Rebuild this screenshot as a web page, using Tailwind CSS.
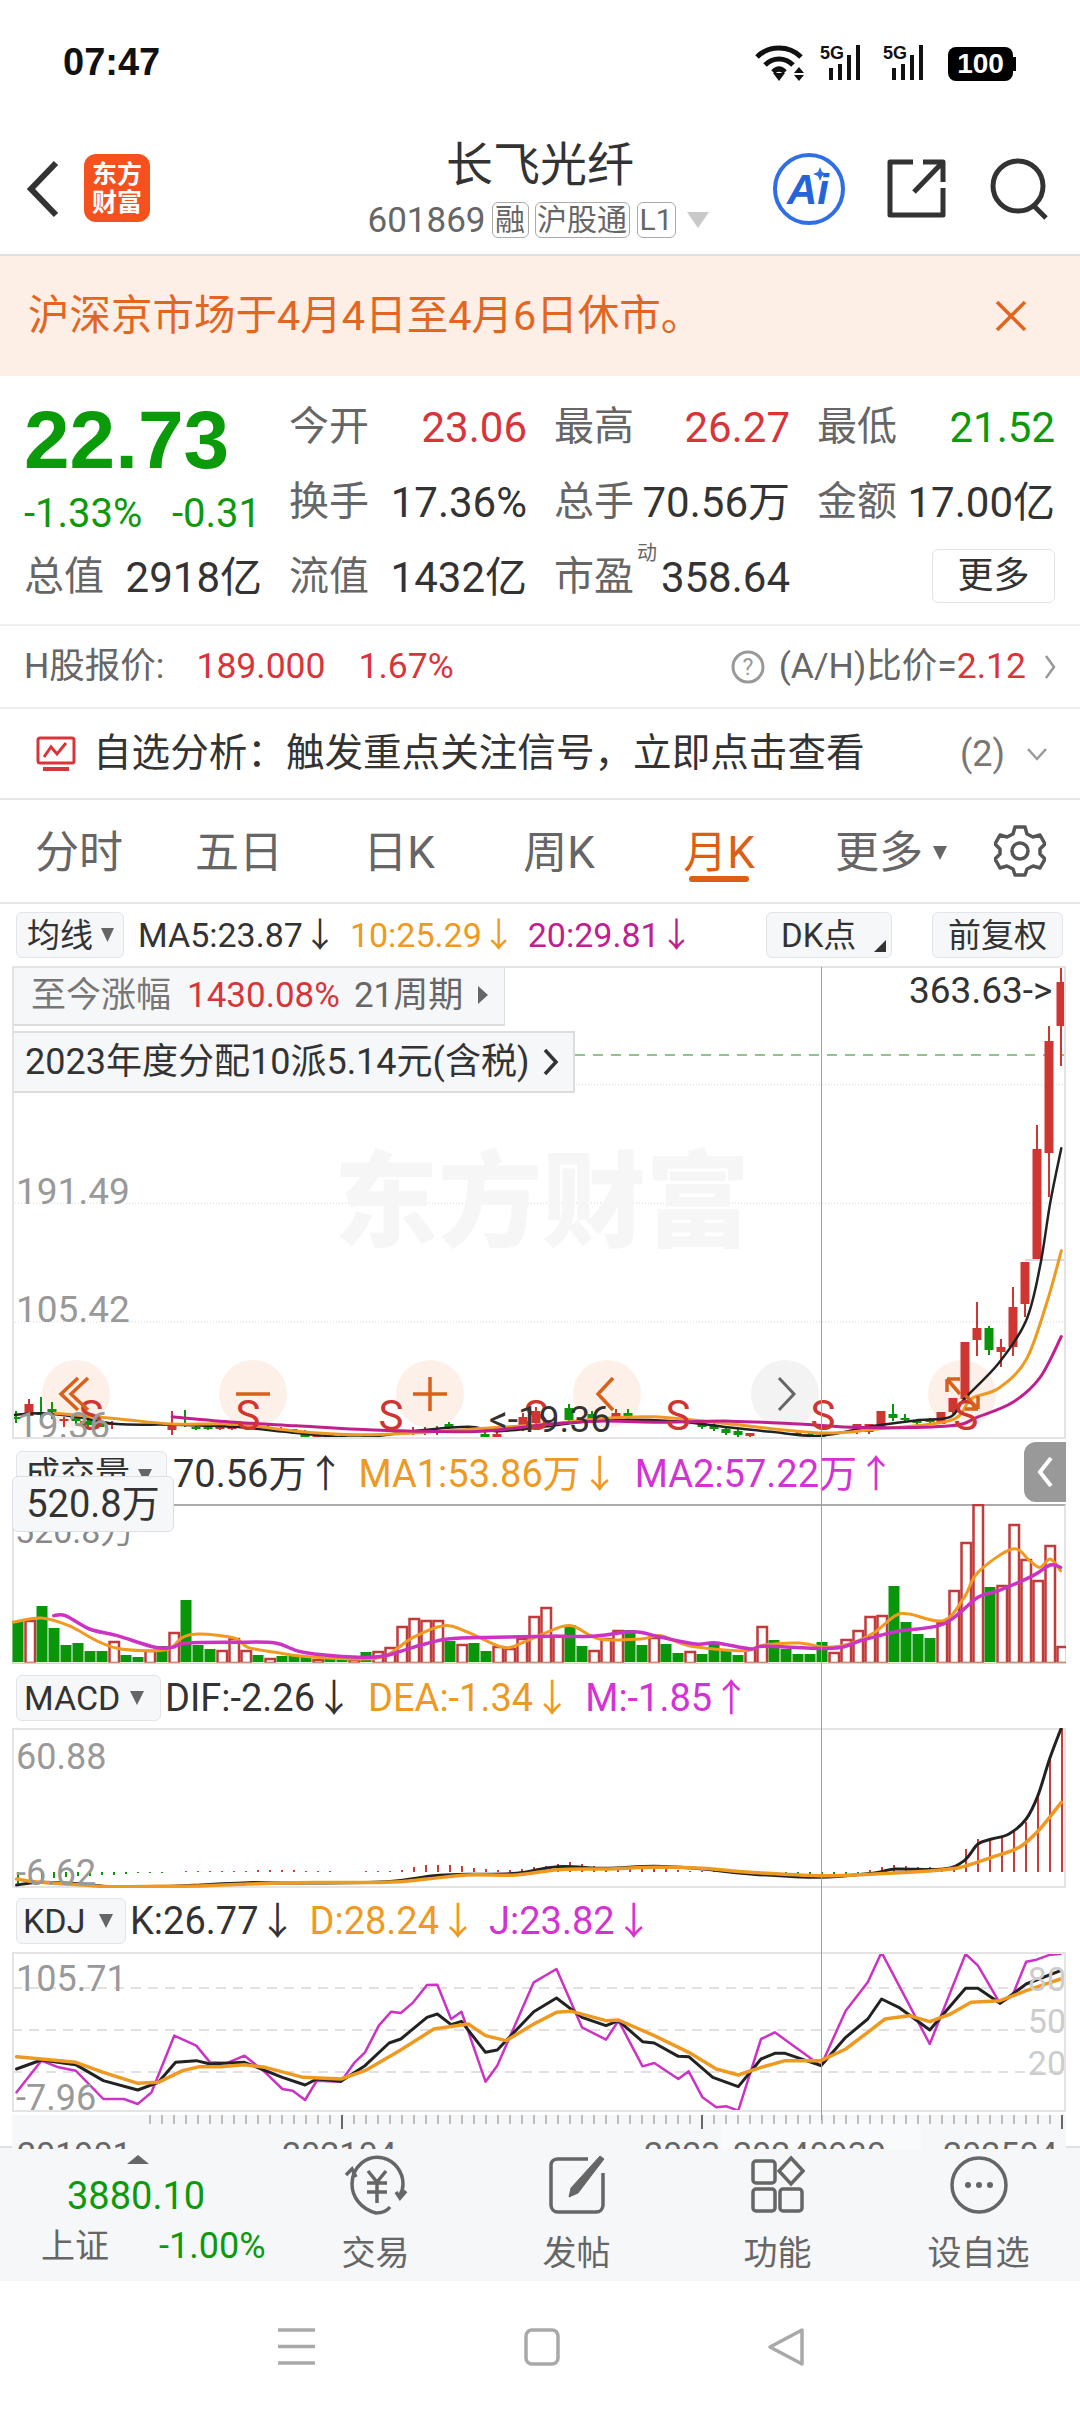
<!DOCTYPE html>
<html lang="zh-CN">
<head>
<meta charset="UTF-8">
<meta name="viewport" content="width=device-width, initial-scale=1.0">
<title>长飞光纤</title>
<script src="https://cdn.jsdelivr.net/npm/@tailwindcss/browser@4"></script>
</head>
<body class="bg-white">
<div class="relative w-[1080px] h-[2414px] overflow-hidden bg-white text-[#333] leading-none [font-family:Roboto,'Noto_Sans_CJK_SC',sans-serif]">

  <!-- status bar -->
  <div class="h-[122px] flex pl-[63px] pr-[64px] pt-[44px] justify-between items-start">
    <span class="text-[38px] font-bold text-[#111] [font-family:'Liberation_Sans',sans-serif] mt-[-1px]">07:47</span>
    <div class="flex items-start">
      <svg width="52" height="36" viewBox="0 0 52 36" class="mt-[1px]" fill="none" stroke="#111" stroke-width="5">
        <path d="M2 12 C14 0 34 0 46 12"/><path d="M10 20 C18 12 30 12 38 20"/><path d="M18 27 C22 23 26 23 30 27"/>
        <path d="M18 28 L24 36 L30 28 Z" fill="#111" stroke="none"/>
        <path d="M44 22 l5 6 h-10 Z M44 36 l5 -6 h-10 Z" fill="#111" stroke="none"/>
      </svg>
      <div class="relative w-[48px] h-[36px] ml-[13px]">
        <span class="absolute left-0 top-0 text-[18px] font-bold text-[#111] [font-family:'Liberation_Sans',sans-serif]">5G</span>
        <svg class="absolute left-0 top-0" width="48" height="36"><path d="M11 36V24M20 36V20M29 36V11M38 36V1" stroke="#111" stroke-width="4"/></svg>
      </div>
      <div class="relative w-[48px] h-[36px] ml-[15px]">
        <span class="absolute left-0 top-0 text-[18px] font-bold text-[#111] [font-family:'Liberation_Sans',sans-serif]">5G</span>
        <svg class="absolute left-0 top-0" width="48" height="36"><path d="M11 36V24M20 36V20M29 36V11M38 36V1" stroke="#111" stroke-width="4"/></svg>
      </div>
      <div class="ml-[17px] mt-[3px] w-[65px] h-[34px] rounded-[8px] bg-black text-white flex items-center justify-center text-[28px] font-bold [font-family:'Liberation_Sans',sans-serif]">100</div>
      <div class="w-[3px] h-[14px] bg-black mt-[13px]"></div>
    </div>
  </div>

  <!-- header -->
  <div class="relative h-[134px] border-b-2 border-[#dfdfdf]">
    <svg class="absolute left-[25px] top-[38px]" width="36" height="58" fill="none" stroke="#333" stroke-width="6"><path d="M31 3 L6 29 L31 55"/></svg>
    <div class="absolute left-[84px] top-[32px] w-[66px] h-[68px] rounded-[12px] bg-[#f4511e] text-white text-[25px] font-bold flex flex-col items-center justify-center gap-[3px]">
      <span>东方</span><span>财富</span>
    </div>
    <div class="flex flex-col items-center pt-[19px]">
      <div class="text-[47px] text-[#333] h-[46px] flex items-center">长飞光纤</div>
      <div class="flex items-center mt-[15px] h-[36px] ml-[-4px] text-[#666]">
        <span class="text-[35px]">601869</span>
        <span class="ml-[6px] w-[37px] h-[36px] border border-[#aaa] rounded-[6px] text-[30px] flex items-center justify-center">融</span>
        <span class="ml-[6px] w-[95px] h-[36px] border border-[#aaa] rounded-[6px] text-[30px] flex items-center justify-center">沪股通</span>
        <span class="ml-[7px] w-[39px] h-[36px] border border-[#aaa] rounded-[6px] text-[30px] flex items-center justify-center">L1</span>
        <svg class="ml-[11px]" width="22" height="16"><path d="M0 0H22L11 16Z" fill="#c9c9c9"/></svg>
      </div>
    </div>
    <svg class="absolute left-[772px] top-[30px]" width="74" height="74" fill="none">
      <circle cx="37" cy="37" r="34" stroke="#2f6ee5" stroke-width="4"/>
      <path d="M48 15L50 20L55 22L50 24L48 29L46 24L41 22L46 20Z" fill="#2f6ee5"/>
    </svg>
    <span class="absolute left-[787px] top-[47px] text-[#2563d8] text-[42px] font-bold italic [font-family:'Liberation_Sans',sans-serif]">Ai</span>
    <svg class="absolute left-[886px] top-[36px]" width="62" height="62" fill="none" stroke="#333" stroke-width="5"><path d="M27 4H4V57H57V30M28 34L56 5M37 4H57V24" stroke-linejoin="round"/></svg>
    <svg class="absolute left-[990px] top-[36px]" width="64" height="62" fill="none" stroke="#333" stroke-width="5"><circle cx="28" cy="28" r="25"/><path d="M44 48L56 60"/></svg>
  </div>

  <!-- notice -->
  <div class="h-[120px] bg-[#fdeee6] flex items-center justify-between pl-[28px] pr-[52px] text-[#e2661f]">
    <span class="text-[41.5px]">沪深京市场于4月4日至4月6日休市。</span>
    <svg width="34" height="34" fill="none" stroke="#e2661f" stroke-width="3.5"><path d="M3 3L31 31M31 3L3 31"/></svg>
  </div>

  <!-- quote -->
  <div class="h-[250px] border-b-2 border-[#eee] pt-[14px] pl-[24px]">
    <div class="grid grid-cols-[238px_238px_236px_238px] grid-rows-[75px_75px_75px] gap-x-[27px] text-[42px] text-[#333] items-center">
      <div class="row-span-2 self-start pt-[10px] text-[#0a9a0a]">
        <div class="h-[80px] flex items-center text-[82px] font-bold [font-family:'Liberation_Sans',sans-serif]">22.73</div>
        <div class="flex justify-between mt-[10px] h-[48px] items-center text-[40px] pr-[1px]"><span>-1.33%</span><span>-0.31</span></div>
      </div>
      <div class="flex justify-between"><span class="text-[40px] text-[#666]">今开</span><span class="text-[#d8353a]">23.06</span></div>
      <div class="flex justify-between"><span class="text-[40px] text-[#666]">最高</span><span class="text-[#d8353a]">26.27</span></div>
      <div class="flex justify-between"><span class="text-[40px] text-[#666]">最低</span><span class="text-[#0a9a0a]">21.52</span></div>
      <div class="flex justify-between"><span class="text-[40px] text-[#666]">换手</span><span>17.36%</span></div>
      <div class="flex justify-between"><span class="text-[40px] text-[#666]">总手</span><span>70.56万</span></div>
      <div class="flex justify-between"><span class="text-[40px] text-[#666]">金额</span><span>17.00亿</span></div>
      <div class="flex justify-between"><span class="text-[40px] text-[#666]">总值</span><span>2918亿</span></div>
      <div class="flex justify-between"><span class="text-[40px] text-[#666]">流值</span><span>1432亿</span></div>
      <div class="relative flex justify-between"><span class="text-[40px] text-[#666]">市盈</span><span class="absolute left-[83px] top-[-14px] text-[20px] text-[#666]">动</span><span>358.64</span></div>
      <div class="flex justify-end"><span class="w-[123px] h-[54px] mt-[-4px] border border-[#e3e3e3] rounded-[6px] text-[36px] flex items-center justify-center">更多</span></div>
    </div>
  </div>

  <!-- H share row -->
  <div class="h-[83px] border-b-2 border-[#eee] flex items-center pl-[24px] pr-[24px] text-[35.5px]">
    <span class="text-[#666]">H股报价:</span>
    <span class="ml-[32px] text-[#d8353a]">189.000</span>
    <span class="ml-[33px] text-[#d8353a]">1.67%</span>
    <svg class="ml-auto" width="34" height="34" fill="none" stroke="#999" stroke-width="3"><circle cx="17" cy="17" r="15"/><text x="17" y="25" text-anchor="middle" font-size="23" fill="#999" stroke="none">?</text></svg>
    <span class="ml-[14px] text-[#666]">(A/H)比价=</span><span class="text-[#d8353a]">2.12</span>
    <svg class="ml-[18px]" width="12" height="26" fill="none" stroke="#999" stroke-width="2.5"><path d="M2 2L10 13L2 24"/></svg>
  </div>

  <!-- watch list hint -->
  <div class="h-[91px] border-b-2 border-[#e6e6e6] flex items-center pl-[36px] pr-[32px]">
    <svg width="40" height="36" fill="none" stroke="#d8353a" stroke-width="3"><rect x="2" y="2" width="36" height="25" rx="2"/><path d="M8 21L15 11L21 18L30 7"/><path d="M7 33H33" stroke-width="4"/></svg>
    <span class="ml-[17px] text-[38.6px]">自选分析&#xFF1A;触发重点关注信号&#xFF0C;立即点击查看</span>
    <span class="ml-auto text-[36px] text-[#777]">(2)</span>
    <svg class="ml-[21px]" width="22" height="14" fill="none" stroke="#999" stroke-width="2.5"><path d="M2 2L11 12L20 2"/></svg>
  </div>

  <!-- period tabs -->
  <div class="h-[104px] border-b-2 border-[#e6e6e6] flex items-center ml-[-1px] pt-[4px] text-[44px] text-[#666]">
    <span class="w-[160px] text-center">分时</span>
    <span class="w-[160px] text-center">五日</span>
    <span class="w-[160px] text-center">日K</span>
    <span class="w-[160px] text-center">周K</span>
    <span class="relative w-[160px] text-center text-[#dd5f15]">月K<i class="absolute left-[0px] right-0 mx-auto top-[45px] w-[60px] h-[6px] rounded-full bg-[#dd5f15]"></i></span>
    <span class="w-[160px] pl-[36px] flex items-center">更多<svg class="ml-[10px]" width="14" height="14"><path d="M0 0H14L7 14Z" fill="#666"/></svg></span>
    <svg class="ml-[35px] mt-[-4px]" width="52" height="52" viewBox="0 0 52 52" fill="none" stroke="#555" stroke-width="3.5" stroke-linejoin="round"><path d="M21 2H31L33 9L39 12L46 10L51 19L46 24V29L51 34L46 43L39 41L33 44L31 50H21L19 44L13 41L6 43L1 34L6 29V24L1 19L6 10L13 12L19 9Z"/><circle cx="26" cy="26" r="8"/></svg>
  </div>

  <!-- MA row -->
  <div class="h-[62px] flex items-center pl-[16px] text-[34px]">
    <span class="w-[108px] h-[46px] bg-[#f6f7f9] border border-[#e2e4e8] rounded-[6px] flex items-center pl-[10px] text-[33px]">均线<svg class="ml-[8px]" width="13" height="14"><path d="M0 0H13L6.5 14Z" fill="#666"/></svg></span>
    <span class="ml-[14px]">MA5:23.87↓</span>
    <span class="ml-[13px] text-[#ee9a22]">10:25.29↓</span>
    <span class="ml-[12px] text-[#c0208f]">20:29.81↓</span>
    <span class="relative ml-auto w-[126px] h-[46px] bg-[#f6f7f9] border border-[#e2e4e8] rounded-[6px] flex items-center pl-[14px] text-[33px]">DK点<svg class="absolute right-[5px] bottom-[5px]" width="12" height="12"><path d="M12 0V12H0Z" fill="#333"/></svg></span>
    <span class="ml-[40px] mr-[17px] w-[131px] h-[46px] bg-[#f6f7f9] border border-[#e2e4e8] rounded-[6px] flex items-center justify-center text-[33px]">前复权</span>
  </div>

  <!-- price panel -->
  <div class="relative ml-[12px] w-[1054px] h-[473px] border-2 border-[#e4e4e4] overflow-hidden">
    <svg id="price-svg" class="absolute left-[-2px] top-[-2px]" width="1054" height="473" viewBox="12 967 1054 473"></svg>
    <div class="absolute left-[-2px] top-[-2px] w-[493px] h-[60px] bg-[#f6f7f9] border-b-2 border-r border-[#ddd] flex items-center pl-[19px] text-[35px]">
      <span class="text-[#777]">至今涨幅</span><span class="ml-[16px] text-[#d8353a]">1430.08%</span><span class="ml-[14px] text-[#666]">21周期</span>
      <svg class="ml-[15px]" width="10" height="18"><path d="M0 0L10 9L0 18Z" fill="#666"/></svg>
    </div>
    <div class="absolute left-[-2px] top-[63px] w-[563px] h-[62px] bg-[#f6f7f9] border-2 border-[#ddd] flex items-center pl-[11px] text-[36px]">
      <span>2023年度分配10派5.14元(含税)</span>
      <svg class="ml-[14px]" width="16" height="28" fill="none" stroke="#333" stroke-width="3.5"><path d="M2 2L13 14L2 26"/></svg>
    </div>
    <span class="absolute left-[320px] top-[184px] text-[104px] font-black text-[#f6f6f6]">东方财富</span>
    <span class="absolute left-[2px] top-[205px] text-[37px] text-[#999]">191.49</span>
    <span class="absolute left-[2px] top-[323px] text-[37px] text-[#999]">105.42</span>
    <span class="absolute left-[3px] top-[439px] text-[37px] text-[#999]">19.36</span>
    <span class="absolute left-[895px] top-[4px] text-[37px] text-[#333]">363.63-&gt;</span>
  </div>

  <!-- volume row -->
  <div class="relative h-[65px] flex items-center pl-[16px] pt-[4px] text-[38px]">
    <span class="w-[151px] h-[50px] bg-[#f6f7f9] border border-[#e2e4e8] rounded-[6px] flex items-center pl-[8px] text-[35px] mt-[4px]">成交量<svg class="ml-[8px]" width="14" height="14"><path d="M0 0H14L7 14Z" fill="#666"/></svg></span>
    <span class="ml-[6px]">70.56万↑</span>
    <span class="ml-[14px] text-[#ee9a22]">MA1:53.86万↓</span>
    <span class="ml-[16px] text-[#d433d4]">MA2:57.22万↑</span>
    <div class="absolute left-[1024px] top-[3px] w-[42px] h-[60px] rounded-l-[12px] bg-[#999] flex items-center justify-center">
      <svg width="18" height="32" fill="none" stroke="#fff" stroke-width="4"><path d="M15 2L4 16L15 30"/></svg>
    </div>
    <div class="absolute left-[12px] top-[37px] w-[162px] h-[56px] z-10 bg-[#f6f7f9] border border-[#dcdfe3] rounded-[6px] flex items-center justify-center text-[38px]">520.8万</div>
  </div>

  <!-- volume panel -->
  <div class="relative ml-[12px] w-[1054px] h-[160px] border-t-2 border-[#aaa] border-x-2 border-x-[#e4e4e4]">
    <svg id="vol-svg" class="absolute left-[-2px] top-[-2px]" width="1054" height="160" viewBox="12 1505 1054 160"></svg>
    <span class="absolute left-[1px] top-[8px] text-[34px] text-[#888]">520.8万</span>
  </div>

  <!-- MACD row -->
  <div class="h-[64px] flex items-center pl-[16px] pt-[4px] text-[38px]">
    <span class="w-[145px] h-[46px] bg-[#f6f7f9] border border-[#e2e4e8] rounded-[6px] flex items-center pl-[7px] text-[34px]">MACD<svg class="ml-[10px]" width="14" height="14"><path d="M0 0H14L7 14Z" fill="#666"/></svg></span>
    <span class="ml-[4px]">DIF:-2.26↓</span>
    <span class="ml-[15px] text-[#ee9a22]">DEA:-1.34↓</span>
    <span class="ml-[14px] text-[#d433d4]">M:-1.85↑</span>
  </div>

  <!-- MACD panel -->
  <div class="relative ml-[12px] w-[1054px] h-[160px] border-2 border-[#e4e4e4]">
    <svg id="macd-svg" class="absolute left-[-2px] top-[-2px]" width="1054" height="160" viewBox="12 1729 1054 160"></svg>
    <span class="absolute left-[2px] top-[9px] text-[36px] text-[#999]">60.88</span>
    <span class="absolute left-[2px] top-[125px] text-[36px] text-[#999]">-6.62</span>
  </div>

  <!-- KDJ row -->
  <div class="h-[64px] flex items-center pl-[16px] pt-[2px] text-[38px]">
    <span class="w-[110px] h-[46px] bg-[#f6f7f9] border border-[#e2e4e8] rounded-[6px] flex items-center pl-[6px] text-[34px]">KDJ<svg class="ml-[14px]" width="14" height="14"><path d="M0 0H14L7 14Z" fill="#666"/></svg></span>
    <span class="ml-[4px]">K:26.77↓</span>
    <span class="ml-[13px] text-[#ee9a22]">D:28.24↓</span>
    <span class="ml-[12px] text-[#d433d4]">J:23.82↓</span>
  </div>

  <!-- KDJ panel -->
  <div class="relative ml-[12px] w-[1054px] h-[160px] border-2 border-[#e4e4e4] overflow-hidden">
    <svg id="kdj-svg" class="absolute left-[-2px] top-[-2px]" width="1054" height="160" viewBox="12 1953 1054 160"></svg>
    <span class="absolute left-[2px] top-[7px] text-[36px] text-[#999]">105.71</span>
    <span class="absolute left-[2px] top-[126px] text-[36px] text-[#999]">-7.96</span>
    <span class="absolute right-[-2px] top-[8px] text-[34px] text-[#ccc]">80</span>
    <span class="absolute right-[-2px] top-[50px] text-[34px] text-[#ccc]">50</span>
    <span class="absolute right-[-2px] top-[92px] text-[34px] text-[#ccc]">20</span>
  </div>

  <!-- time axis -->
  <div class="relative ml-[12px] w-[1054px] h-[34px] mt-[3px] mb-[-3px] bg-[#f6f7f9] overflow-hidden">
    <div class="absolute left-[709px] top-[5px] w-[200px] h-[40px] bg-[#f9fafb] rounded-[6px]"></div>
    <svg id="axis-svg" class="absolute left-0 top-0" width="1054" height="34" viewBox="12 2116 1054 34"></svg>
    <span class="absolute left-[5px] top-[22px] text-[34px] text-[#666]">201901</span>
    <span class="absolute left-[270px] top-[22px] text-[34px] text-[#666]">202104</span>
    <span class="absolute left-[632px] top-[22px] text-[34px] text-[#666]">2023</span>
    <span class="absolute left-[721px] top-[22px] text-[34px] text-[#666]">20240930</span>
    <span class="absolute left-[931px] top-[22px] text-[34px] text-[#666]">202504</span>
  </div>

  <!-- bottom toolbar -->
  <div class="h-[135px] bg-[#f6f7f9] border-t-2 border-[#dfe1e4] flex">
    <div class="w-[275px] pt-[7px] pl-[41px] flex flex-col items-start">
      <svg class="ml-[86px]" width="22" height="9"><path d="M11 0L22 9H0Z" fill="#666"/></svg>
      <span class="h-[46px] ml-[26px] mt-[9px] flex items-center text-[38px] text-[#0a9a0a]">3880.10</span>
      <div class="flex items-center h-[40px] mt-[7px]">
        <span class="text-[34px] text-[#666]">上证</span>
        <span class="ml-[50px] text-[36px] text-[#0a9a0a]">-1.00%</span>
      </div>
    </div>
    <div class="w-[201px] flex flex-col items-center pt-[7px] text-[34px] text-[#666]">
      <svg width="66" height="60" viewBox="0 0 66 60" fill="none" stroke="#666" stroke-width="3.5">
        <path d="M40 3C24 -1 9 12 9 29C9 42 18 54 33 58C38 58 44 56 47 52"/>
        <path d="M40 3C52 6 60 17 60 29C60 33 59 37 57 40"/>
        <path d="M3 20L9 14L13 22M63 36L57 43L53 37"/>
        <path d="M25 16L34 27L43 16M24 28H44M24 37H44M34 27V48"/>
      </svg>
      <span class="h-[36px] mt-[20px] flex items-center">交易</span>
    </div>
    <div class="w-[201px] flex flex-col items-center pt-[7px] text-[34px] text-[#666]">
      <svg width="58" height="60" viewBox="0 0 58 60" fill="none" stroke="#666" stroke-width="3.5">
        <path d="M40 4H10C6 4 3 6 3 10V50C3 54 6 57 10 57H48C52 57 55 54 55 50V18"/>
        <path d="M52 1L56 4L30 38L21 42L23 33Z" fill="#666" stroke-width="1"/>
      </svg>
      <span class="h-[36px] mt-[20px] flex items-center">发帖</span>
    </div>
    <div class="w-[201px] flex flex-col items-center pt-[7px] text-[34px] text-[#666]">
      <svg width="54" height="60" viewBox="0 0 54 60" fill="none" stroke="#666" stroke-width="3.5">
        <rect x="2" y="6" width="22" height="22" rx="3"/>
        <path d="M40 3L52 16L40 29L28 16Z"/>
        <rect x="2" y="34" width="22" height="22" rx="3"/>
        <rect x="29" y="34" width="22" height="22" rx="3"/>
      </svg>
      <span class="h-[36px] mt-[20px] flex items-center">功能</span>
    </div>
    <div class="w-[201px] flex flex-col items-center pt-[7px] text-[34px] text-[#666]">
      <svg width="60" height="60" viewBox="0 0 60 60" fill="none" stroke="#666" stroke-width="3.5">
        <circle cx="30" cy="30" r="27"/>
        <circle cx="19" cy="30" r="3" fill="#666" stroke="none"/><circle cx="30" cy="30" r="3" fill="#666" stroke="none"/><circle cx="41" cy="30" r="3" fill="#666" stroke="none"/>
      </svg>
      <span class="h-[36px] mt-[20px] flex items-center">设自选</span>
    </div>
  </div>

  <!-- system nav -->
  <div class="relative h-[132px] bg-white">
    <svg class="absolute left-0 top-0" width="1080" height="132" fill="none" stroke="#a9a9a9" stroke-width="3.5">
      <path d="M278 49H315M278 65.500H315M278 82H315"/>
      <rect x="526" y="49" width="32" height="34" rx="6"/>
      <path d="M802 49V83L770 66Z" stroke-linejoin="round"/>
    </svg>
  </div>

  <!-- crosshair runs through all panels -->
  <div class="absolute left-[821px] top-[967px] w-[1px] h-[1153px] bg-[#a0a0a0]"></div>
</div>

<script>
const NS = 'http://www.w3.org/2000/svg';
const RED = '#cf3531', GREEN = '#0a960a';

function add(svg, tag, attrs, text) {
  const el = document.createElementNS(NS, tag);
  for (const k in attrs) el.setAttribute(k, attrs[k]);
  if (text) el.textContent = text;
  svg.appendChild(el);
  return el;
}

// catmull-rom through the points
function smooth(p) {
  let d = `M${p[0][0]} ${p[0][1]}`;
  for (let i = 0; i < p.length - 1; i++) {
    const a = p[i - 1] || p[i], b = p[i], c = p[i + 1], e = p[i + 2] || c;
    d += ` C${b[0] + (c[0] - a[0]) / 6} ${b[1] + (c[1] - a[1]) / 6} ${c[0] - (e[0] - b[0]) / 6} ${c[1] - (e[1] - b[1]) / 6} ${c[0]} ${c[1]}`;
  }
  return d;
}

// points below were read off crops: x scale 1.452, y scale depends on crop
const mapPts = (pts, sy, y0) => pts.map(([x, y]) => [x / 1.452, y / sy + y0]);

function line(svg, pts, color, width, curved) {
  add(svg, 'path', { d: curved ? smooth(pts) : 'M' + pts.map(p => p.join(' ')).join('L'), fill: 'none', stroke: color, 'stroke-width': width, 'stroke-linejoin': 'round', 'stroke-linecap': 'round' });
}

/* ---------- price ---------- */
const price = document.getElementById('price-svg');
[1086, 1204, 1323].forEach(y => add(price, 'line', { x1: 12, x2: 1066, y1: y, y2: y, stroke: '#d5d5d5', 'stroke-width': 1, 'stroke-dasharray': '1 2' }));
add(price, 'line', { x1: 575, x2: 1066, y1: 1056, y2: 1056, stroke: '#6fae6f', 'stroke-width': 1.5, 'stroke-dasharray': '10 8' });
add(price, 'line', { x1: 1025, x2: 1066, y1: 1261, y2: 1261, stroke: '#ccc', 'stroke-width': 1.5 });

const CIRCLES = [76, 253, 430, 607, 785, 962];
CIRCLES.forEach((x, i) => add(price, 'circle', { cx: x, cy: 1395, r: 34, fill: i === 4 ? '#f3f3f3' : '#fdf0e8' }));

// x, colour, body top, body bottom, wick top, wick bottom
const CANDLES = [
  [16, 'g', 1418, 1420, 1412, 1424], [29, 'r', 1405, 1417, 1400, 1422], [41, 'g', 1414, 1416, 1398, 1420], [52, 'g', 1410, 1413, 1403, 1420],
  [64, 'r', 1420, 1422, 1418, 1428], [76, 'g', 1419, 1422, 1415, 1425], [88, 'g', 1422, 1426, 1418, 1430], [100, 'g', 1424, 1428, 1424, 1428],
  [112, 'r', 1424, 1426, 1422, 1430], [172, 'r', 1427, 1431, 1412, 1436], [185, 'g', 1424, 1426, 1411, 1428], [196, 'g', 1428, 1430, 1426, 1431],
  [208, 'g', 1428, 1430, 1426, 1431], [220, 'r', 1428, 1430, 1427, 1431], [232, 'r', 1428, 1430, 1427, 1431], [268, 'g', 1428, 1431, 1426, 1432],
  [281, 'r', 1430, 1432, 1428, 1433], [293, 'g', 1430, 1433, 1430, 1435], [305, 'g', 1433, 1438, 1431, 1438], [317, 'r', 1437, 1439, 1435, 1441],
  [329, 'g', 1436, 1438, 1434, 1439], [341, 'g', 1437, 1440, 1436, 1440], [413, 'r', 1432, 1434, 1428, 1436], [425, 'r', 1432, 1434, 1428, 1436],
  [437, 'r', 1431, 1433, 1427, 1436], [449, 'g', 1425, 1428, 1423, 1430], [485, 'g', 1435, 1440, 1433, 1444], [497, 'r', 1435, 1439, 1433, 1440],
  [523, 'r', 1418, 1428, 1414, 1432], [536, 'r', 1412, 1424, 1408, 1428], [569, 'g', 1409, 1421, 1405, 1424], [592, 'g', 1415, 1420, 1412, 1422],
  [616, 'r', 1414, 1420, 1410, 1422], [628, 'g', 1414, 1418, 1410, 1420], [702, 'g', 1424, 1428, 1422, 1430], [714, 'g', 1426, 1430, 1424, 1432],
  [726, 'g', 1430, 1434, 1428, 1436], [738, 'g', 1432, 1436, 1430, 1438], [750, 'r', 1434, 1437, 1434, 1442], [797, 'g', 1434, 1436, 1432, 1437],
  [809, 'g', 1435, 1437, 1434, 1438], [821, 'g', 1436, 1438, 1434, 1439], [857, 'r', 1425, 1433, 1425, 1435], [869, 'r', 1425, 1433, 1425, 1435],
  [881, 'r', 1412, 1428, 1412, 1430], [893, 'g', 1415, 1419, 1405, 1422], [905, 'g', 1419, 1421, 1415, 1424], [917, 'g', 1422, 1424, 1420, 1426],
  [930, 'g', 1421, 1423, 1419, 1425], [941, 'r', 1413, 1425, 1413, 1425], [953, 'r', 1399, 1413, 1399, 1415], [965, 'r', 1343, 1400, 1343, 1402],
  [977, 'r', 1329, 1341, 1303, 1357], [989, 'g', 1329, 1351, 1327, 1356], [1001, 'r', 1348, 1353, 1340, 1368], [1013, 'r', 1308, 1348, 1288, 1357],
  [1025, 'r', 1263, 1305, 1263, 1318], [1037, 'r', 1150, 1260, 1126, 1260], [1049, 'r', 1042, 1154, 1027, 1198], [1061, 'r', 983, 1027, 967, 1067]
];
CANDLES.forEach(([x, c, t, b, wt, wb]) => {
  const col = c === 'r' ? RED : GREEN;
  add(price, 'line', { x1: x, x2: x, y1: wt, y2: wb, stroke: col, 'stroke-width': 2 });
  add(price, 'rect', { x: x - 4.5, y: t, width: 9, height: b - t, fill: col });
});

line(price, mapPts([[20,1445],[60,1440],[110,1450],[170,1470],[250,1472],[340,1478],[430,1495],[520,1508],[600,1490],[680,1478],[720,1490],[780,1480],[870,1460],[980,1462],[1060,1480],[1120,1492],[1190,1503],[1270,1475],[1330,1460],[1380,1450],[1400,1400],[1450,1300],[1490,1180],[1510,1030],[1525,850],[1541,698]], 2.8, 900), '#222', 2.5, true);
line(price, mapPts([[80,1440],[170,1455],[250,1470],[340,1470],[430,1490],[520,1500],[600,1495],[720,1480],[800,1470],[870,1455],[950,1450],[1060,1470],[1190,1495],[1270,1485],[1380,1460],[1410,1400],[1450,1370],[1490,1290],[1520,1130],[1541,985]], 2.8, 900), '#ee9a22', 3, true);
line(price, mapPts([[250,1450],[340,1465],[430,1475],[520,1485],[600,1490],[700,1490],[800,1470],[870,1462],[950,1465],[1060,1462],[1160,1470],[1250,1480],[1380,1475],[1420,1450],[1470,1410],[1510,1340],[1541,1225]], 2.8, 900), '#c0208f', 3, true);

[91, 248, 391, 536, 678, 823, 966].forEach(x => add(price, 'text', { x, y: 1431, 'text-anchor': 'middle', 'font-size': 42, fill: RED, 'font-family': 'Roboto' }, 'S'));
add(price, 'text', { x: 489, y: 1433, 'font-size': 37, fill: '#333', 'font-family': 'Roboto' }, '<-19.36');

// toolbar glyphs on the circles
const ORANGE = { fill: 'none', stroke: '#d9601a', 'stroke-width': 3.5 };
add(price, 'path', { ...ORANGE, d: 'M78 1379L61 1395L78 1411M88 1379L71 1395L88 1411' });
add(price, 'path', { ...ORANGE, d: 'M236 1395H270' });
add(price, 'path', { ...ORANGE, d: 'M413 1395H447M430 1378V1412' });
add(price, 'path', { ...ORANGE, d: 'M613 1379L598 1395L613 1411' });
add(price, 'path', { fill: 'none', stroke: '#666', 'stroke-width': 3, d: 'M779 1379L794 1395L779 1411' });
add(price, 'path', { ...ORANGE, d: 'M947 1380V1393M947 1380H960M947 1380L960 1395M978 1410V1397M978 1410H965M978 1410L965 1396' });

/* ---------- volume ---------- */
const vol = document.getElementById('vol-svg');
const VOL = [-41,42,-56,-34,-17,-19,-11,-11,21,-7,-5,12,-16,30,-62,-17,-13,12,24,12,-7,4,-6,-6,-5,3,-4,-6,3,-10,11,15,36,44,42,42,-21,18,-19,-11,16,14,24,46,55,27,-37,-16,12,24,32,-32,-17,25,-18,-9,11,-8,-18,-11,-7,14,36,-22,-13,-8,-8,-20,10,23,32,46,47,-76,-40,-28,-24,40,72,120,158,-75,77,138,103,82,117,16];
const VOL_BASE = 1663;
VOL.forEach((v, i) => {
  const x = 12 + 12 * i, h = Math.abs(v);
  if (v < 0) add(vol, 'rect', { x: x + 0.5, y: VOL_BASE - h, width: 11, height: h, fill: GREEN });
  else add(vol, 'rect', { x: x + 1.5, y: VOL_BASE - h + 1, width: 9.5, height: h, fill: '#fff', stroke: '#c23a3a', 'stroke-width': 2.5 });
});
add(vol, 'line', { x1: 12, x2: 1066, y1: 1664.5, y2: 1664.5, stroke: '#bfe5bf', 'stroke-width': 2 });
line(vol, mapPts([[18,550],[60,537],[100,560],[140,605],[170,628],[210,635],[245,630],[265,595],[290,585],[340,597],[360,625],[400,640],[440,652],[520,660],[560,650],[600,595],[645,560],[680,580],[730,625],[760,610],[800,575],[830,560],[870,600],[930,600],[960,590],[1000,620],[1080,635],[1110,618],[1160,612],[1200,625],[1240,610],[1270,580],[1300,530],[1320,525],[1370,545],[1400,475],[1420,400],[1470,330],[1495,365],[1510,385],[1525,360],[1540,395]], 3, 1440), '#f09a20', 3, true);
line(vol, mapPts([[78,530],[95,530],[130,570],[170,590],[225,625],[250,625],[270,612],[340,610],[400,612],[440,640],[520,655],[560,650],[600,625],[650,600],[720,595],[800,592],[860,592],[920,578],[960,595],[1010,615],[1040,612],[1090,630],[1110,622],[1210,628],[1250,605],[1300,578],[1370,555],[1420,475],[1450,455],[1500,410],[1525,378],[1540,385]], 3, 1440), '#cc33c4', 3.5, true);

/* ---------- macd ---------- */
const macd = document.getElementById('macd-svg');
const MACD = [-12,-10,-8,-6,-5,-4,-4,-3,-3,-2,-1,-1,-1,0, 1,1,1,1,1,1,2,2,2,2,1,1,1, 0,0, 1,1,1,2, 5,7,7,7,6, 4, 3,2,2,3, 5,6,8,10,8, 6,5,5,4,5, 4,3,2,1, 1,1, -1,-1,-2,-3,-4,-5,-5,-4,-5,-4,-3,-2, 2, 5,7,6,5,5,4,6, 23,33,33,35,40,50,78,115,143];
MACD.forEach((v, i) => {
  if (!v) return;
  const x = 18 + 12 * i;
  add(macd, 'line', { x1: x, x2: x, y1: 1873, y2: 1873 - v, stroke: v > 0 ? '#c93a3a' : GREEN, 'stroke-width': 2 });
});
line(macd, mapPts([[24,678],[60,670],[120,675],[160,683],[230,683],[300,677],[360,671],[430,672],[560,668],[630,650],[680,646],[750,643],[810,623],[880,628],[950,622],[1020,630],[1090,645],[1190,655],[1270,642],[1300,630],[1370,630],[1400,605],[1420,555],[1440,540],[1465,525],[1490,480],[1507,410],[1524,300],[1541,207]], 3, 1660), '#222', 3, true);
line(macd, mapPts([[24,660],[60,670],[120,678],[160,683],[230,682],[300,680],[360,675],[430,671],[560,670],[620,660],[680,648],[750,648],[810,632],[880,630],[950,625],[1020,628],[1090,640],[1190,650],[1270,645],[1370,632],[1400,622],[1440,595],[1480,565],[1510,510],[1541,430]], 3, 1660), '#ee9a22', 3.5, true);

/* ---------- kdj ---------- */
const kdj = document.getElementById('kdj-svg');
[1989, 2031, 2073].forEach(y => add(kdj, 'line', { x1: 12, x2: 1066, y1: y, y2: y, stroke: '#d8d8d8', 'stroke-width': 1.5, 'stroke-dasharray': '10 7' }));
line(kdj, mapPts([[24,610],[60,515],[85,535],[110,545],[150,630],[180,630],[200,645],[220,610],[253,440],[285,470],[305,520],[330,522],[355,500],[385,550],[410,600],[425,605],[443,633],[460,575],[495,578],[515,520],[530,490],[550,410],[568,368],[582,372],[600,340],[620,288],[635,287],[655,390],[670,368],[705,578],[722,530],[775,280],[808,240],[845,415],[880,452],[898,395],[933,532],[950,522],[985,570],[1000,547],[1020,625],[1040,655],[1055,652],[1072,665],[1105,450],[1125,430],[1145,460],[1192,530],[1228,365],[1260,280],[1280,190],[1350,465],[1402,195],[1420,230],[1452,343],[1470,320],[1490,218],[1505,212],[1525,197],[1540,195]], 3, 1890), '#cc33c4', 2.5);
line(kdj, mapPts([[24,540],[60,513],[110,527],[150,575],[200,603],[230,580],[255,520],[285,515],[305,525],[355,520],[410,565],[443,588],[460,570],[495,577],[530,530],[565,462],[582,450],[620,385],[635,375],[655,407],[670,397],[705,490],[722,483],[775,368],[808,327],[845,385],[880,410],[898,395],[933,458],[950,462],[985,502],[1000,503],[1035,565],[1072,593],[1105,510],[1125,493],[1140,493],[1192,530],[1228,445],[1260,390],[1280,330],[1305,355],[1350,423],[1402,298],[1420,298],[1452,343],[1490,285],[1540,245]], 3, 1890), '#222', 3);
line(kdj, mapPts([[24,503],[60,510],[110,520],[150,550],[200,583],[230,580],[265,545],[290,533],[320,533],[355,527],[385,535],[440,565],[495,570],[530,545],[580,485],[630,420],[680,405],[705,440],[735,455],[775,405],[808,370],[830,367],[880,395],[898,393],[950,440],[1000,490],[1040,540],[1072,558],[1105,535],[1140,515],[1192,515],[1228,480],[1260,430],[1285,390],[1320,380],[1350,398],[1380,375],[1410,340],[1452,335],[1490,305],[1540,270]], 3, 1890), '#ee9a22', 3.5);

/* ---------- time axis ---------- */
const axis = document.getElementById('axis-svg');
for (let x = 150; x < 1064; x += 12) {
  const major = x === 342 || x === 702 || x === 1062;
  add(axis, 'line', { x1: x, x2: x, y1: 2116, y2: major ? 2130 : 2125, stroke: major ? '#666' : '#aaa', 'stroke-width': major ? 2 : 1.5 });
}
</script>
</body>
</html>
